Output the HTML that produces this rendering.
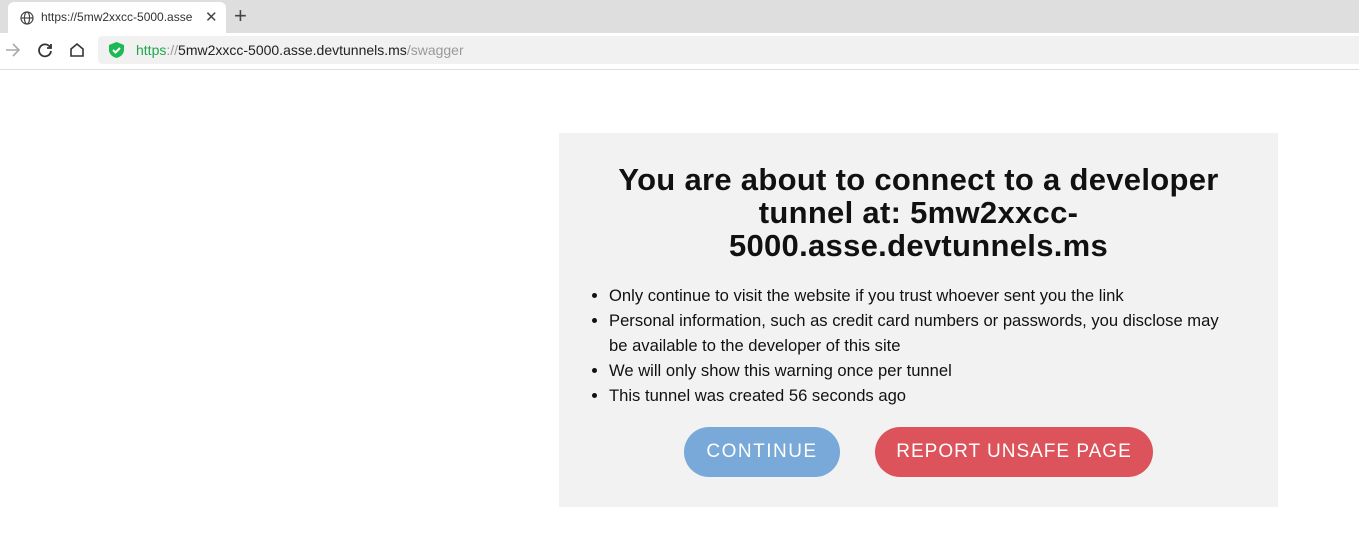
<!DOCTYPE html>
<html><head><style>
body{margin:0;width:1359px;height:551px;background:#fff;font-family:"Liberation Sans",sans-serif;position:relative;overflow:hidden}
.tabbar{position:absolute;left:0;top:0;width:1359px;height:33px;background:#dedede}
.tab{position:absolute;left:8px;top:2px;width:218px;height:31px;background:#fff;border-radius:6px 6px 0 0}
.tab .t{position:absolute;left:33px;top:8px;font-size:12px;color:#333;white-space:nowrap;width:160px;overflow:hidden}
.tab .x{position:absolute;left:197px;top:6px;font-size:15px;color:#444}
.plus{position:absolute;left:234px;top:3px;font-size:22px;color:#444}
.bar{position:absolute;left:0;top:33px;width:1359px;height:36px;background:#fff;border-bottom:1px solid #ddd}
.url{position:absolute;left:98px;top:3px;width:1261px;height:28px;background:#f1f1f1;border-radius:4px 0 0 4px}
.url .u{position:absolute;left:38px;top:6px;font-size:14px;color:#222;white-space:nowrap}
.box{position:absolute;left:559px;top:133px;width:719px;height:374px;background:#f2f2f2}
h1{margin:0;position:absolute;left:0;top:30px;width:719px;text-align:center;font-size:31px;line-height:33px;font-weight:bold;color:#111;letter-spacing:0.3px}
ul{position:absolute;left:30px;top:150px;margin:0;padding-left:20px;font-size:16.6px;line-height:25px;color:#111;width:660px}
.btn{position:absolute;top:294px;height:50px;border-radius:25px;color:#fff;font-size:19px;letter-spacing:1.5px;text-align:center;line-height:50px}
</style></head><body>
<div class="tabbar">
 <div class="tab">
  <svg style="position:absolute;left:12px;top:9px" width="14" height="14" viewBox="0 0 14 14" fill="none" stroke="#444" stroke-width="1.2"><circle cx="7" cy="7" r="6"/><ellipse cx="7" cy="7" rx="2.6" ry="6"/><line x1="1" y1="7" x2="13" y2="7"/></svg>
  <div class="t">https://5mw2xxcc-5000.asse</div><div class="x">✕</div>
 </div>
 <div class="plus">+</div>
</div>
<div class="bar">
 <svg style="position:absolute;left:5px;top:9px" width="16" height="16" viewBox="0 0 16 16" fill="none" stroke="#aaa" stroke-width="1.6"><path d="M1 8h13M8 2l6 6-6 6"/></svg>
 <svg style="position:absolute;left:37px;top:9px" width="16" height="16" viewBox="0 0 16 16" fill="none" stroke="#333" stroke-width="1.8"><path d="M13 5A6 6 0 1 0 14 9"/><path d="M14 2v4h-4" /></svg>
 <svg style="position:absolute;left:69px;top:9px" width="16" height="16" viewBox="0 0 16 16" fill="none" stroke="#333" stroke-width="1.6"><path d="M2 7l6-5 6 5v7H2z"/></svg>
 <div class="url">
  <svg style="position:absolute;left:11px;top:6px" width="15" height="16" viewBox="0 0 15 16"><path d="M7.5 0L15 3v5c0 4-3.5 7-7.5 8C3.5 15 0 12 0 8V3z" fill="#1db954"/><path d="M4 8l2.5 2.5L11 6" stroke="#fff" stroke-width="2" fill="none"/></svg>
  <div class="u"><span style="color:#1ea84a">https</span><span style="color:#999">://</span>5mw2xxcc-5000.asse.devtunnels.ms<span style="color:#999">/swagger</span></div>
 </div>
</div>
<div class="box">
 <h1>You are about to connect to a developer<br>tunnel at: 5mw2xxcc-<br>5000.asse.devtunnels.ms</h1>
 <ul>
  <li>Only continue to visit the website if you trust whoever sent you the link</li>
  <li>Personal information, such as credit card numbers or passwords, you disclose may<br>be available to the developer of this site</li>
  <li>We will only show this warning once per tunnel</li>
  <li>This tunnel was created 56 seconds ago</li>
 </ul>
 <div class="btn" style="left:125px;width:156px;background:#78a9d8">CONTINUE</div>
 <div class="btn" style="left:316px;width:278px;background:#dc535b;letter-spacing:1px">REPORT UNSAFE PAGE</div>
</div>
</body></html>
